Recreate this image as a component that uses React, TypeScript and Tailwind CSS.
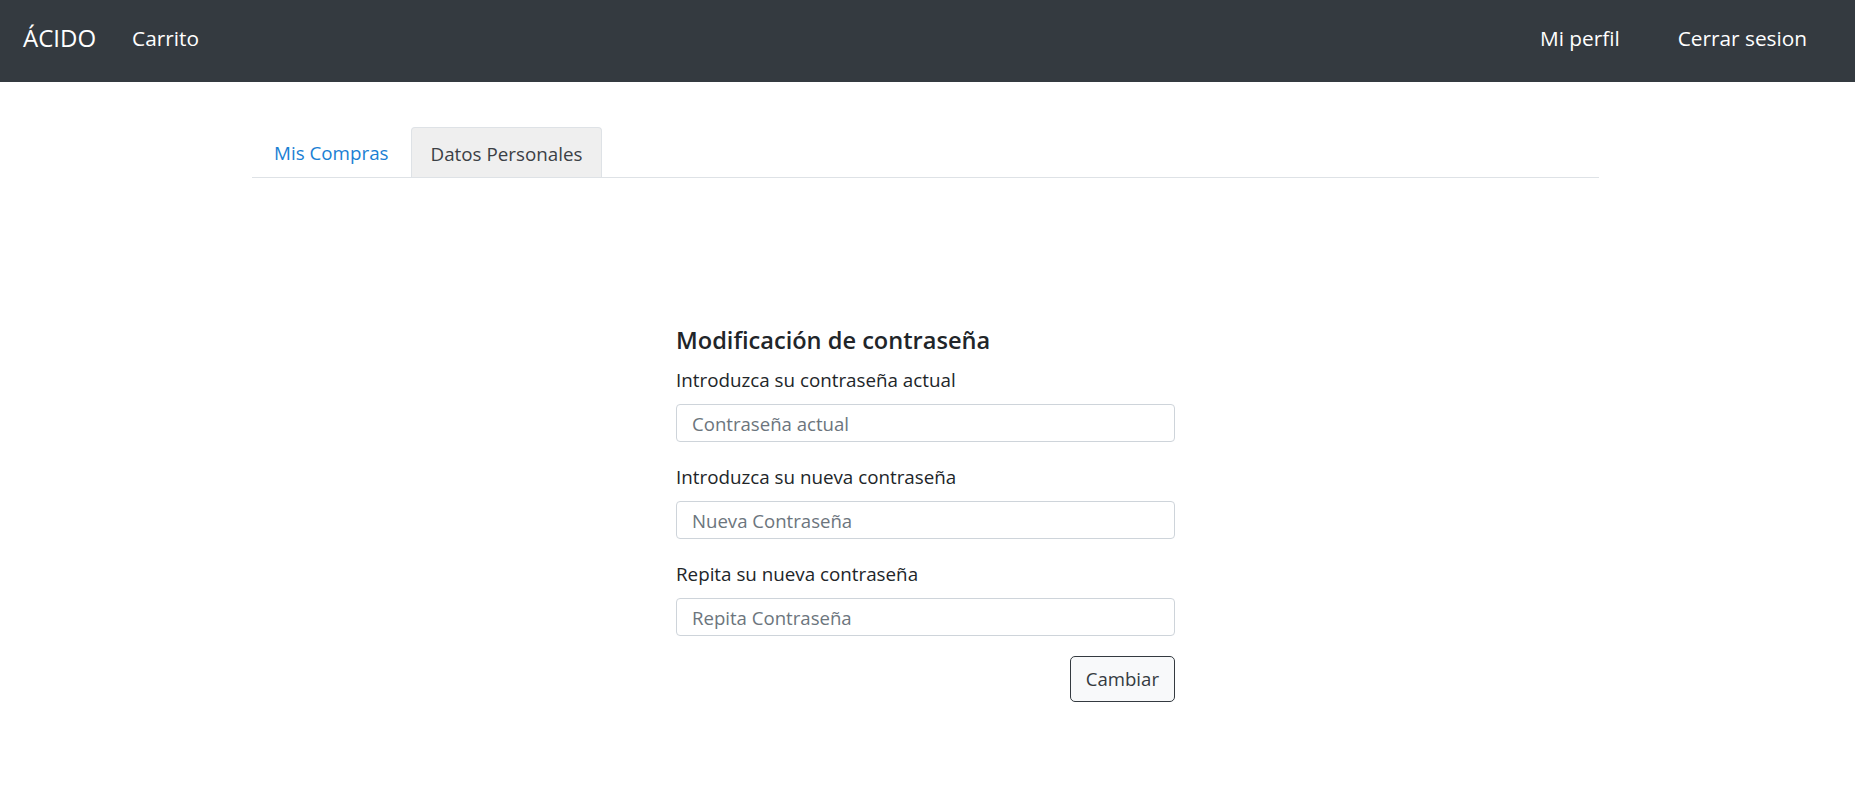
import React from "react";

export default function App() {
  const inputCls =
    "h-[38px] border border-[#ced4da] rounded-[4px] px-[15px] text-[18.6px] text-[#495057] placeholder:text-[#6c757d] outline-none bg-white";
  return (
    <div className="min-h-screen bg-white text-[#212529]" style={{ fontFamily: '"Open Sans", "Noto Sans", sans-serif' }}>
      <nav className="h-[82px] bg-[#343a40] flex items-center pl-[23px] pr-[48px] pb-[6px]">
        <span className="text-[24px] text-white leading-none">ÁCIDO</span>
        <a className="ml-[36px] text-[20.8px] text-white leading-none">Carrito</a>
        <div className="ml-auto flex items-center gap-[58px]">
          <a className="text-[20.8px] text-white leading-none">Mi perfil</a>
          <a className="text-[20.8px] text-white leading-none">Cerrar sesion</a>
        </div>
      </nav>

      <div className="ml-[252px] mr-[256px] mt-[45px]">
        <div className="flex border-b border-[#dee2e6] h-[51px]">
          <a className="px-[21px] pt-[3px] border border-transparent flex items-center text-[18.8px] text-[#1a7fd4]">Mis Compras</a>
          <a className="px-[19px] pt-[3px] border border-[#dee2e6] border-b-0 rounded-t-[4px] bg-[#efefef] flex items-center text-[18.8px] text-[#3b4045]">
            Datos Personales
          </a>
        </div>

        <div className="flex justify-center mt-[148px]">
          <form className="w-[499px] flex flex-col" onSubmit={(e) => e.preventDefault()}>
            <h5 className="text-[23.6px] font-semibold leading-[1.2] text-[#212529] mb-[12px]">Modificación de contraseña</h5>
            <label className="text-[18.8px] leading-[28px] mb-[10px]">Introduzca su contraseña actual</label>
            <input type="password" placeholder="Contraseña actual" className={inputCls + " mb-[21px]"} />
            <label className="text-[18.8px] leading-[28px] mb-[10px]">Introduzca su nueva contraseña</label>
            <input type="password" placeholder="Nueva Contraseña" className={inputCls + " mb-[21px]"} />
            <label className="text-[18.8px] leading-[28px] mb-[10px]">Repita su nueva contraseña</label>
            <input type="password" placeholder="Repita Contraseña" className={inputCls + " mb-[20px]"} />
            <div className="flex justify-end">
              <button
                type="submit"
                className="h-[46px] px-[15px] border border-[#343a40] rounded-[5px] bg-[#f8f9fa] text-[18.6px] text-[#343a40]"
              >
                Cambiar
              </button>
            </div>
          </form>
        </div>
      </div>
    </div>
  );
}
